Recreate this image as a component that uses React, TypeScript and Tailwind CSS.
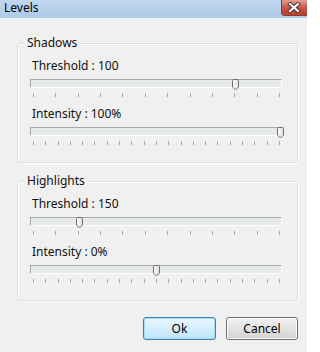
import React from "react";

const FONT = { fontFamily: '"Noto Sans", "Open Sans", sans-serif' };

function Thumb({ center }: { center: number }) {
  return (
    <svg
      className="absolute top-[-1px]"
      style={{ left: center - 3.5 }}
      width="7"
      height="12"
      viewBox="0 0 7 12"
    >
      <defs>
        <linearGradient id="tg" x1="0" y1="0" x2="1" y2="0">
          <stop offset="0" stopColor="#ffffff" />
          <stop offset="1" stopColor="#dcdcdc" />
        </linearGradient>
      </defs>
      <path
        d="M1.5 0.5 H5.5 A1 1 0 0 1 6.5 1.5 V8 L3.5 11 L0.5 8 V1.5 A1 1 0 0 1 1.5 0.5 Z"
        fill="url(#tg)"
        stroke="#6f6f6f"
        strokeWidth="1"
      />
    </svg>
  );
}

function Slider({
  label,
  thumb,
  ticks,
  first,
}: {
  label: string;
  thumb: number;
  ticks: number;
  first?: boolean;
}) {
  return (
    <div className={first ? "" : "mt-[9px]"}>
      <div className="pl-[2px] text-[12px] leading-[16px] text-[#111]">{label}</div>
      <div className="relative mt-[5px] h-[9px] w-[252px] border-t border-l border-t-[#a9a9a9] border-l-[#a9a9a9] border-b border-r border-b-white border-r-white bg-[#e7eaea]">
        <Thumb center={thumb} />
      </div>
      <div className="mt-[5px] ml-[3px] flex w-[247px] justify-between">
        {Array.from({ length: ticks }).map((_, i) => (
          <div key={i} className="h-[4px] w-px bg-[#ababab]" />
        ))}
      </div>
    </div>
  );
}

function Group({
  title,
  children,
  className,
}: {
  title: string;
  children: React.ReactNode;
  className?: string;
}) {
  return (
    <div
      className={
        "relative ml-[17px] w-[281px] rounded-[3px] border border-[#d5dfe5] pl-[12px] pt-[14px] pb-[17px] shadow-[1px_1px_0_#ffffff,inset_1px_1px_0_#ffffff] " +
        (className ?? "")
      }
    >
      <div className="absolute left-[6px] top-[-9px] bg-[#f0f0f0] px-[3px] text-[12px] leading-[16px] text-[#111]">
        {title}
      </div>
      {children}
    </div>
  );
}

export default function App() {
  return (
    <div className="h-[352px] w-[307px] overflow-hidden bg-[#f0f0f0]" style={FONT}>
      <div className="relative flex h-[18px] items-start bg-gradient-to-b from-[#c2d7ef] to-[#adc9e9] pl-[4px]">
        <span className="text-[12px] leading-[16px] text-[#000]">Levels</span>
        <div className="absolute right-[-4px] top-0 flex h-[16px] w-[30px] items-center justify-center rounded-bl-[4px] border border-t-0 border-[#8a3a32] bg-gradient-to-b from-[#e0a197] via-[#c8574a] to-[#b7402f] pr-[4px]">
          <svg width="14" height="11" viewBox="0 0 14 11">
            <path d="M3 2 L11 9 M11 2 L3 9" stroke="#4a2a2a" strokeWidth="4" strokeLinecap="square" />
            <path d="M3 2 L11 9 M11 2 L3 9" stroke="#ffffff" strokeWidth="2.2" strokeLinecap="square" />
          </svg>
        </div>
      </div>

      <Group title="Shadows" className="mt-[25px]">
        <Slider label="Threshold : 100" thumb={204} ticks={12} first />
        <Slider label="Intensity : 100%" thumb={249.5} ticks={21} />
      </Group>

      <Group title="Highlights" className="mt-[18px]">
        <Slider label="Threshold : 150" thumb={48} ticks={12} first />
        <Slider label="Intensity : 0%" thumb={125.5} ticks={21} />
      </Group>

      <div className="mt-[16px] flex justify-end gap-[10px] pr-[9px]">
        <button className="h-[23px] w-[73px] rounded-[3px] border border-[#3c7fb1] bg-gradient-to-b from-[#eaf6fd] to-[#bee6fd] text-[12px] leading-[16px] text-[#000] shadow-[inset_0_0_0_1px_#a9dcf7]">
          Ok
        </button>
        <button className="h-[23px] w-[72px] rounded-[3px] border border-[#707070] bg-gradient-to-b from-[#f2f2f2] to-[#d4d4d4] text-[12px] leading-[16px] text-[#000] shadow-[inset_0_0_0_1px_#fbfbfb]">
          Cancel
        </button>
      </div>
    </div>
  );
}
